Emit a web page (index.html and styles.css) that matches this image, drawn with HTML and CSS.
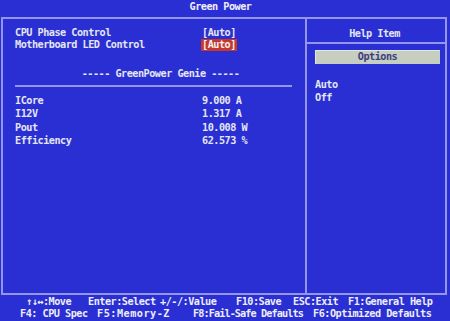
FILE: index.html
```html
<!DOCTYPE html>
<html>
<head>
<meta charset="utf-8">
<link rel="stylesheet" href="styles.css">
</head>
<body>
<div class="title">Green Power</div>
<div class="frame">
  <div class="main">
    <div class="row"><span class="label">CPU Phase Control</span><span class="val">[Auto]</span></div>
    <div class="row"><span class="label">Motherboard LED Control</span><span class="val sel">[Auto]</span></div>
    <div class="genie">----- GreenPower Genie -----</div>
    <div class="stats">
      <div class="srow"><span class="label">ICore</span><span>9.000 A</span></div>
      <div class="srow"><span class="label">I12V</span><span>1.317 A</span></div>
      <div class="srow"><span class="label">Pout</span><span>10.008 W</span></div>
      <div class="srow"><span class="label">Efficiency</span><span>62.573 %</span></div>
    </div>
  </div>
  <div class="help">
    <div class="help-head">Help Item</div>
    <div class="options">Options</div>
    <div class="opts">
      <div>Auto</div>
      <div>Off</div>
    </div>
  </div>
</div>
<div class="footer">
  <div class="fline l1">
    <span>↑↓↔:Move</span><span>Enter:Select</span><span>+/-/:Value</span><span>F10:Save</span><span>ESC:Exit</span><span>F1:General Help</span>
  </div>
  <div class="fline l2">
    <span>F4: CPU Spec</span><span>F5:Memory-Z</span><span>F8:Fail-Safe Defaults</span><span>F6:Optimized Defaults</span>
  </div>
</div>
</body>
</html>
```

FILE: styles.css
```css
html, body {
  margin: 0;
  padding: 0;
  background: #2a2fd3;
}
body {
  width: 450px;
  height: 321px;
  overflow: hidden;
  font-family: "DejaVu Sans Mono", "Liberation Mono", monospace;
  font-weight: bold;
  font-size: 10.2px;
  letter-spacing: -0.5px;
  color: #e4e6f2;
}
.title {
  height: 17px;
  line-height: 13px;
  text-align: center;
  padding-right: 9px;
  box-sizing: border-box;
  color: #f0f0f8;
}
.frame {
  margin-left: 1px;
  width: 446px;
  height: 278px;
  box-sizing: border-box;
  border: 2px solid #9496ee;
  display: grid;
  grid-template-columns: 302px 1fr;
}
.main {
  padding: 7.6px 13px 0 12px;
}
.row {
  display: flex;
  align-items: center;
  height: 12.5px;
  line-height: 12.5px;
}
.label {
  width: 187px;
  flex: none;
}
.val {
  line-height: 12px;
}
.sel {
  background: #c4372a;
  margin-left: -1px;
  padding: 0 1px;
  color: #f4f0f0;
}
.genie {
  margin-top: 15.7px;
  line-height: 13px;
  padding-left: 14px;
  padding-bottom: 4.9px;
  text-align: center;
  border-bottom: 2px solid #9496ee;
}
.stats {
  margin-top: 6.8px;
}
.srow {
  display: flex;
  line-height: 13.33px;
}
.help {
  border-left: 2px solid #9496ee;
}
.help-head {
  line-height: 13px;
  padding-top: 7.6px;
  height: 25px;
  box-sizing: border-box;
  text-align: center;
  padding-right: 3px;
  border-bottom: 2px solid #9496ee;
}
.options {
  margin: 6px 5px 0 8px;
  height: 14px;
  line-height: 14px;
  text-align: center;
  background: #c5cec0;
  color: #3c3f7e;
  box-shadow: inset 1px 1px 0 #e2e8de;
}
.opts {
  margin-top: 13.8px;
  padding-left: 8px;
  line-height: 13.33px;
}
.footer {
  padding-top: 1px;
  color: #eeeef6;
}
.fline {
  display: flex;
  line-height: 12px;
  white-space: pre;
}
.fline span {
  flex: none;
}
.l1 {
  padding-left: 26px;
}
.l1 span:nth-child(1) { width: 62px; }
.l1 span:nth-child(2) { width: 72px; }
.l1 span:nth-child(3) { width: 76px; }
.l1 span:nth-child(4) { width: 57px; }
.l1 span:nth-child(5) { width: 55px; }
.l2 {
  padding-left: 20px;
}
.l2 span:nth-child(1) { width: 77px; }
.l2 span:nth-child(2) { width: 96px; letter-spacing: 0.5px; }
.l2 span:nth-child(3) { width: 120px; letter-spacing: -0.9px; }
```
